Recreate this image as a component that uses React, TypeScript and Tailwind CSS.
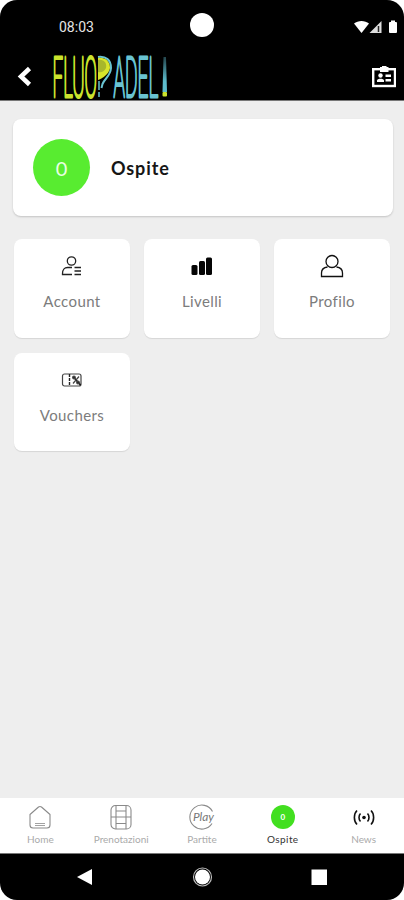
import type { ReactNode } from "react";

type Item = {
  label: string;
  icon: ReactNode;
};

function AccountIcon() {
  return (
    <svg width="22" height="22" viewBox="0 0 22 22" fill="none" stroke="#222" strokeWidth="1.3">
      <circle cx="10.5" cy="6" r="4.2" />
      <path d="M11 12.5H6.5C3.5 12.5 1.5 15 1.5 18.5V19.5H11" />
      <path d="M13.5 12.5H20M13.5 16H20M13.5 19.5H20" />
    </svg>
  );
}

function LevelsIcon() {
  return (
    <svg width="22" height="22" viewBox="0 0 22 22" fill="#050505">
      <rect x="0.5" y="10" width="6" height="10" rx="1.5" />
      <rect x="8" y="6" width="6" height="14" rx="1.5" />
      <rect x="15" y="2.5" width="6" height="17.5" rx="1.5" />
    </svg>
  );
}

function ProfileIcon() {
  return (
    <svg width="24" height="24" viewBox="0 0 24 24" fill="none" stroke="#111" strokeWidth="1.3">
      <circle cx="12" cy="7.5" r="6" />
      <path d="M7.5 13C3.5 13.5 1.5 16 1.5 19V22.5H22.5V19C22.5 16 20.5 13.5 16.5 13" />
    </svg>
  );
}

function VoucherIcon() {
  return (
    <svg width="22" height="22" viewBox="0 0 22 22" fill="none" stroke="#444" strokeWidth="1.2">
      <rect x="1.5" y="5" width="18.5" height="12" rx="2" />
      <path d="M8.5 5V17" stroke="#222" strokeWidth="1.4" strokeDasharray="3 1" />
      <path d="M12 7.5L19.5 16" stroke="#111" strokeWidth="1.6" />
      <path d="M18 7.5L12 14.5" />
      <circle cx="13" cy="8.5" r="1.3" fill="#222" />
      <circle cx="17" cy="13.5" r="1.3" fill="#222" />
    </svg>
  );
}

function HomeIcon() {
  return (
    <svg width="24" height="26" viewBox="0 0 24 26" fill="none" stroke="#8a8a8a" strokeWidth="1.1">
      <path d="M2 10.5L10.5 3Q12 2 13.5 3L22 10.5V21C22 23 21 24 19 24H5C3 24 2 23 2 21Z" strokeLinejoin="round" />
      <path d="M7 19.5H17M7 21.5H17" strokeWidth="0.8" />
    </svg>
  );
}

function CourtIcon() {
  return (
    <svg width="24" height="26" viewBox="0 0 24 26" fill="none" stroke="#8a8a8a" strokeWidth="1.1">
      <rect x="2" y="1.5" width="20" height="23.5" rx="4.5" />
      <path d="M2 13H22M7 1.5V25M17 1.5V25M7 7H17M7 19.5H17" />
    </svg>
  );
}

function PlayIcon() {
  return (
    <svg width="26" height="26" viewBox="0 0 26 26" fill="none" stroke="#8a8a8a" strokeWidth="1.1">
      <path d="M23.5 7.5A12 12 0 1 0 23 19.5" />
      <text
        x="4"
        y="17"
        textLength="21"
        lengthAdjust="spacingAndGlyphs"
        fill="#777"
        stroke="none"
        className="font-['Lato',sans-serif] text-[11px] italic"
      >
        Play
      </text>
    </svg>
  );
}

function NewsIcon() {
  return (
    <svg width="24" height="26" viewBox="0 0 24 26" fill="none" stroke="#111" strokeWidth="1.6">
      <circle cx="12" cy="13.5" r="1.8" fill="#111" stroke="none" />
      <path d="M8.5 9.5C6.5 11.5 6.5 15.5 8.5 17.5M15.5 9.5C17.5 11.5 17.5 15.5 15.5 17.5" />
      <path d="M5 6.5C1.5 10 1.5 17 5 20.5M19 6.5C22.5 10 22.5 17 19 20.5" />
    </svg>
  );
}

function Logo() {
  return (
    <svg className="overflow-visible" width="118" height="46" viewBox="0 0 118 46">
      <defs>
        <linearGradient id="bar" x1="0" y1="0" x2="0" y2="1">
          <stop offset="0" stopColor="#24464d" />
          <stop offset="0.7" stopColor="#5dbccc" />
        </linearGradient>
      </defs>
      <g className="font-['Roboto',sans-serif] text-[56px] font-thin" strokeWidth="2.3" strokeLinejoin="round">
        <text
          transform="translate(0.5 43) scale(0.32 1)"
          textLength="139"
          lengthAdjust="spacingAndGlyphs"
          fill="#cbe32d"
          stroke="#cbe32d"
          style={{ vectorEffect: "non-scaling-stroke" }}
        >
          FLUO
        </text>
        <text
          transform="translate(61.5 43) scale(0.32 1)"
          textLength="140"
          lengthAdjust="spacingAndGlyphs"
          fill="#69c3d1"
          stroke="#69c3d1"
          style={{ vectorEffect: "non-scaling-stroke" }}
        >
          ADEL
        </text>
      </g>
      {/* racket */}
      <path d="M46 3C54 2 59 6 59 14C58.5 22 53 24 50.5 30L49.5 34" fill="none" stroke="#69c3d1" strokeWidth="2" />
      <path d="M46 4C53 3 58 7 58 14C57 20 51 24 46 26Z" fill="#d8e52a" />
      <path d="M46 6C52 5 55 9 54 14C52 18 49 19 46 18Z" fill="#a8b72b" />
      <path d="M47 27V36M47 38V43" stroke="#69c3d1" strokeWidth="1.5" />
      {/* exclamation */}
      <path d="M111.5 3H114L115 38H110.5Z" fill="url(#bar)" />
      <rect x="110.5" y="38" width="4.5" height="4.5" rx="1" fill="#cbe32d" />
    </svg>
  );
}

const tiles: Item[] = [
  { label: "Account", icon: <AccountIcon /> },
  { label: "Livelli", icon: <LevelsIcon /> },
  { label: "Profilo", icon: <ProfileIcon /> },
  { label: "Vouchers", icon: <VoucherIcon /> },
];

const tabs: Item[] = [
  { label: "Home", icon: <HomeIcon /> },
  { label: "Prenotazioni", icon: <CourtIcon /> },
  { label: "Partite", icon: <PlayIcon /> },
  {
    label: "Ospite",
    icon: (
      <span className="flex size-6 items-center justify-center rounded-full bg-[#42df20] text-[8px] font-bold text-white">
        0
      </span>
    ),
  },
  { label: "News", icon: <NewsIcon /> },
];

export default function App() {
  return (
    <div className="h-[900px] w-[404px] bg-white font-['Lato',sans-serif]">
      <div className="flex h-full flex-col overflow-hidden rounded-[17px] bg-[#eeeeee]">
        {/* Status bar */}
        <div className="grid h-[53px] shrink-0 grid-cols-3 items-center bg-black">
          <span className="pl-[59px] font-['Roboto',sans-serif] text-sm leading-none text-[#e5e5e5]">
            08:03
          </span>
          <span className="mb-1 size-6 justify-self-center rounded-full bg-white" />
          <svg className="justify-self-end" width="50" height="16" viewBox="0 0 50 16" fill="#fff">
            <path d="M0 4.5C4 1 11 1 15 4.5L7.5 14Z" />
            <path d="M15.5 14L27.5 2V14Z" fill="#ddd" />
            <path d="M24.5 7V13" stroke="#222" strokeWidth="1.5" />
            <path d="M35 4Q35 3 36 3H37V1.5H41V3H42Q43 3 43 4V13Q43 14 42 14H36Q35 14 35 13Z" />
          </svg>
        </div>

        {/* Header */}
        <header className="flex h-12 shrink-0 items-center border-b border-[#777] bg-black pr-2 pl-4">
          <svg className="shrink-0" width="18" height="22" viewBox="0 0 18 22" fill="none" stroke="#fff" strokeWidth="4.5">
            <path d="M13.5 2.5L5 10.5L13.5 18.5" />
          </svg>
          <div className="ml-[18px]">
            <Logo />
          </div>
          <svg className="ml-auto shrink-0" width="26" height="24" viewBox="0 0 26 24" fill="#fff">
            <rect x="3.2" y="4.2" width="21.8" height="16.8" fill="none" stroke="#fff" strokeWidth="2.4" />
            <path d="M10 2H12V1H16.5V2H18.5V7H10Z" />
            <circle cx="10.5" cy="10.5" r="2.2" />
            <path d="M7 17V15.5C7 13 14 13 14 15.5V17Z" />
            <path d="M15.5 9.5H21V12H15.5ZM15.5 14H21V16.5H15.5Z" />
          </svg>
        </header>

        <main className="flex-1 pt-[18px] pr-[11px] pl-[13px]">
          <div className="flex h-[97px] items-center rounded-lg bg-white pl-5 shadow-[0_1px_2px_rgba(0,0,0,0.18)]">
            <span className="flex size-[57px] items-center justify-center rounded-full bg-[#58ec30] text-xl text-[#e9ffe3]">
              0
            </span>
            <span className="ml-[21px] text-lg font-bold tracking-[0.9px] text-[#161616]">Ospite</span>
          </div>

          <div className="mt-[23px] grid grid-cols-[repeat(3,116px)] gap-x-3.5 gap-y-[15px] pl-px">
            {tiles.map((tile) => (
              <div
                key={tile.label}
                className="flex h-[98.5px] flex-col items-center rounded-lg bg-white pt-[15px] shadow-[0_1px_1px_rgba(0,0,0,0.1)]"
              >
                <div className="flex h-6 items-center">{tile.icon}</div>
                <span className="mt-3 text-[15px] tracking-[0.4px] text-[#7c7c7c]">{tile.label}</span>
              </div>
            ))}
          </div>
        </main>

        {/* Bottom navigation */}
        <nav className="grid h-[55px] shrink-0 grid-cols-5 bg-white pt-1.5">
          {tabs.map((tab) => (
            <div key={tab.label} className="flex flex-col items-center">
              <div className="flex h-[26px] items-center">{tab.icon}</div>
              <span
                className={`mt-0.5 text-[10px] ${
                  tab.label === "Ospite" ? "tracking-[0.4px] text-[#333]" : "text-[#aaa]"
                }`}
              >
                {tab.label}
              </span>
            </div>
          ))}
        </nav>

        {/* Android buttons */}
        <div className="h-[47px] shrink-0 border-t border-[#777] bg-black">
          <svg width="404" height="46" viewBox="0 0 404 46" fill="#fff">
            <path d="M77 23L92 15V31Z" />
            <circle cx="202.5" cy="23" r="7.5" />
            <circle cx="202.5" cy="23" r="9" fill="none" stroke="#bbb" strokeWidth="1.2" />
            <rect x="311.5" y="15.5" width="15.5" height="15.5" />
          </svg>
        </div>
      </div>
    </div>
  );
}
